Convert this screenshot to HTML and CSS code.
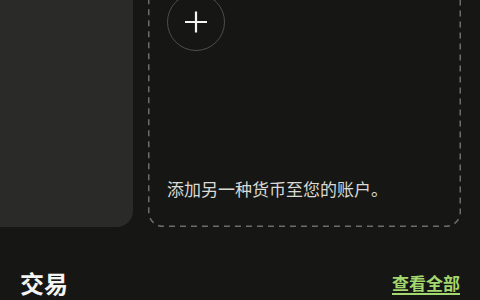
FILE: index.html
```html
<!DOCTYPE html>
<html lang="zh-CN">
<head>
<meta charset="utf-8">
<link rel="stylesheet" href="styles.css">
</head>
<body>
<div class="cards">
  <div class="card card-filled"></div>
  <div class="card card-add">
    <svg class="dash" width="100%" height="100%" preserveAspectRatio="none">
      <rect x="0.75" y="0.75" width="311.5" height="265.5" rx="14" ry="14" fill="none" stroke="#6c6c68" stroke-width="1.5" stroke-dasharray="6 5"/>
    </svg>
    <div class="add-btn">
      <svg width="24" height="24" viewBox="0 0 24 24">
        <path d="M12 1.5V22.5M1 12H23" stroke="#f4f4f2" stroke-width="2.2" fill="none"/>
      </svg>
    </div>
    <p class="add-text">添加另一种货币至您的账户。</p>
  </div>
</div>
<div class="section-head">
  <h2 class="section-title">交易</h2>
  <a class="see-all" href="#">查看全部</a>
</div>
</body>
</html>
```
FILE: styles.css
```css
html, body {
  margin: 0;
  padding: 0;
  background: #161714;
  font-family: "Noto Sans CJK SC", "Noto Sans", sans-serif;
  overflow: hidden;
  width: 480px;
  height: 300px;
}
.cards {
  display: flex;
  gap: 15px;
  margin-top: -40px;
  padding-right: 19px;
  height: 267px;
}
.card {
  border-radius: 14px;
  box-sizing: border-box;
}
.card-filled {
  margin-left: -20px;
  width: 153px;
  background: #2a2b29;
  border-radius: 16px;
}
.card-add {
  position: relative;
  flex: 1;
  display: flex;
  flex-direction: column;
  justify-content: space-between;
  padding: 33px 0 27px 19px;
}
.dash {
  position: absolute;
  inset: 0;
}
.add-btn {
  width: 58px;
  height: 58px;
  box-sizing: border-box;
  border: 1.5px solid #4d4e4b;
  border-radius: 50%;
  display: flex;
  align-items: center;
  justify-content: center;
}
.add-text {
  margin: 0;
  font-size: 17px;
  line-height: 22px;
  color: #d9d9d5;
}
.section-head {
  display: flex;
  justify-content: space-between;
  align-items: center;
  padding: 0 20px;
  margin-top: 40px;
}
.section-title {
  margin: 0;
  font-size: 24px;
  line-height: 32px;
  font-weight: 700;
  color: #f4f4f2;
}
.see-all {
  font-size: 17px;
  line-height: 24px;
  font-weight: 700;
  color: #a3d86e;
  text-decoration: underline;
  text-decoration-thickness: 2px;
  text-underline-offset: 3px;
}
```
